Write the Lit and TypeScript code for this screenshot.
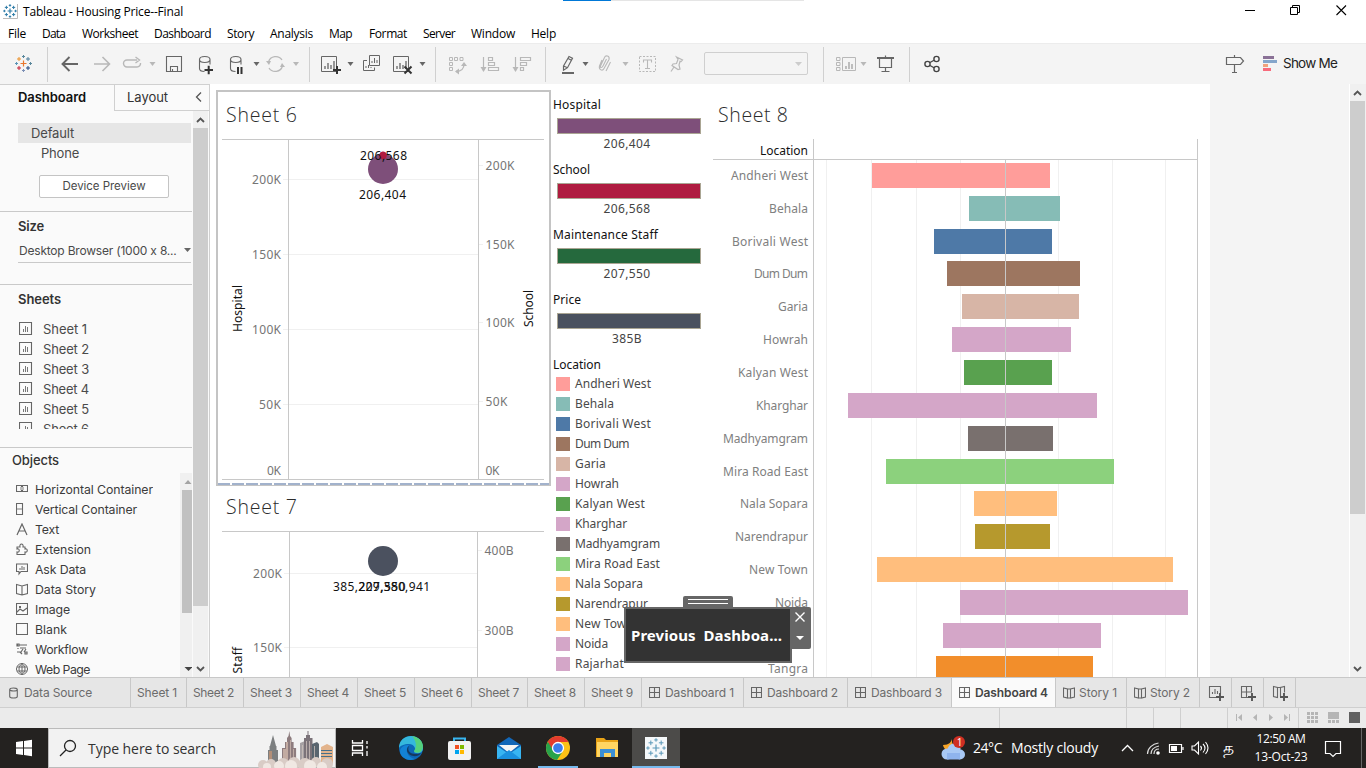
import { LitElement, html, svg, css } from "lit";
import { customElement, property } from "lit/decorators.js";

/** A single-line label whose tracking adapts so that it fills `w` pixels. */
@customElement("fit-text")
class FitText extends LitElement {
  @property() text = "";
  @property({ type: Number }) w = 0;
  static styles = css`
    :host { display: inline-block; white-space: pre; }
    .inner { display: inline-block; }
  `;
  firstUpdated() {
    const el = this.renderRoot.querySelector(".inner") as HTMLElement;
    const natural = el.getBoundingClientRect().width;
    if (this.w && natural) this.style.letterSpacing = (this.w - natural) / this.text.length + "px";
  }
  render() {
    return html`<span class="inner">${this.text}</span>`;
  }
}

const t = (text: string, w: number, cls = "") => html`<fit-text class=${cls} .text=${text} .w=${w}></fit-text>`;

/** A drawing that covers the window area x0..x1, y0..y1, in window coordinates. */
const area = (x0: number, x1: number, y0: number, y1: number, body: unknown) =>
  html`<svg class="area" width=${x1 - x0} height=${y1 - y0} viewBox="${x0} ${y0} ${x1 - x0} ${y1 - y0}">${body}</svg>`;

/** Chart text, vertically centred on cy. */
const label = (x: number, cy: number, text: string, w: number, cls = "axis", anchor = "start") =>
  svg`<text class=${cls} x=${x} y=${cy + (cls === "title" ? 7 : 4.5)} text-anchor=${anchor} textLength=${w} lengthAdjust="spacing">${text}</text>`;

const line = (x1: number, y1: number, x2: number, y2: number, c = "#c8c8c8", w = 1) =>
  svg`<line x1=${x1} y1=${y1} x2=${x2} y2=${y2} stroke=${c} stroke-width=${w} />`;
const path = (d: string, c = "#666", w = 1, fill = "none") =>
  svg`<path d=${d} stroke=${c} stroke-width=${w} fill=${fill} />`;
const fill = (d: string, c: string) => svg`<path d=${d} fill=${c} />`;
const rect = (x: number, y: number, w: number, h: number, c: string) =>
  svg`<rect x=${x} y=${y} width=${w} height=${h} fill=${c} />`;
const caret = (x: number, c = "#666") => fill(`M${x - 3} 62h6l-3 4z`, c);

const D = "#666";
const L = "#b8b8b8";
const plus = (x: number, y: number, r: number, c: string, w = 1) => path(`M${x - r} ${y}h${2 * r}M${x} ${y - r}v${2 * r}`, c, w);
const tableauMark = (x: number, y: number, k: number, cs: string[]) => [
  plus(x, y, 3 * k, cs[0], 1.2),
  plus(x - 4.5 * k, y - 4.5 * k, 2 * k, cs[1]), plus(x + 4.5 * k, y - 4.5 * k, 2 * k, cs[2]),
  plus(x - 4.5 * k, y + 4.5 * k, 2 * k, cs[3]), plus(x + 4.5 * k, y + 4.5 * k, 2 * k, cs[4]),
  plus(x, y - 7 * k, 1.5 * k, cs[5]), plus(x, y + 7 * k, 1.5 * k, cs[6]),
  plus(x - 7 * k, y, 1.5 * k, cs[7]), plus(x + 7 * k, y, 1.5 * k, cs[5]),
];
const blues = Array(8).fill("#2f7da8");
const sheetBox = (x: number, y: number, c = D) => [
  path(`M${x + 0.5} ${y + 0.5}h15v15h-15z`, c), path(`M${x + 4} ${y + 13}v-3M${x + 7} ${y + 13}v-6M${x + 10} ${y + 13}v-4M${x + 13} ${y + 13}v-8`, c, 1.3),
];
const sep = (x: number) => line(x + 0.5, 47, x + 0.5, 82, "#d0d0d0");
const db = (x: number) => path(`M${x} 59.5c0-4 10.500-4 10.500 0s-10.500 4-10.500 0v9c0 2 2 3 5 3M${x + 10.5} 59.500v5`, D, 1.1);

const toolbar: [number, number, unknown][] = [
  [0, 55, [tableauMark(23.5, 63.5, 1, ["#e8762d", "#eb912b", "#4f7f9c", "#c72037", "#1f457e", "#59879b", "#7b8fb5", "#5a93b5"]), sep(47)]],
  [55, 87, path("M78 64H63M69.5 57l-7 7l7 7", D, 1.9)],
  [87, 117, path("M94 64h15M102.500 57l7 7l-7 7", L, 1.6)],
  [117, 160, [path("M133 60h-6a3.500 3.500 0 0 0 0 7h10a3.500 3.500 0 0 0 3.500-4M130 60h7M135.500 57l4 3l-4 3", L, 1.4), caret(152.500, L)]],
  [160, 190, [path("M166.500 56.500h15v15h-15z", D, 1.1), path("M170.500 71v-4.500h7v4.500M172.500 71v-2", D, 1.1)]],
  [190, 220, [db(199.500), path("M204.500 70h8.500M208.700 65.800v8.500", "#333", 2)]],
  [220, 262, [db(230.500), path("M238 67v7M241.500 67v7", "#333", 2), caret(256.500)]],
  [262, 315, [path("M268.500 62a7.500 7.500 0 0 1 13.500-2M282.500 66a7.500 7.500 0 0 1-13.500 2", L, 1.3), fill("M266 61h5l-2 4zM280 67h5l-3-4z", L), caret(296, L), sep(309)]],
  [315, 357, [sheetBox(321, 56), path("M333 70h8M337 66v8", "#333", 2), caret(350.500)]],
  [357, 386, [path("M369.500 55.500h10v10h-10zM367 60.500h-3.500v10h11v-3", D), path("M372 63v-2M374.500 63v-5M377 63v-3M366 68v-2M368.500 68v-3M371 68v-1", D)]],
  [386, 442, [sheetBox(393, 56), path("M404.500 66.500l7 7M411.500 66.500l-7 7", "#333", 2), caret(422.500), sep(435)]],
  [442, 474, [path("M449.500 57.500h3v3h-3zM454.500 57.500h3v3h-3zM460 57.500h3v3h-3zM449.500 62.500h3v3h-3zM449.500 67.500h3v3h-3z", L), path("M464 64c0 5-2 7-8 7.500", L, 1.4), fill("M461 66l3-4 3 4zM459 68.500v6l-4-3z", L)]],
  [474, 506, [path("M483.500 57v14M488.500 57.500h4v3h-4zM488.500 62.500h6v3h-6zM488.500 67.500h10v3h-10z", L, 1.2), fill("M480.500 67h6l-3 5z", L)]],
  [506, 553, [path("M515.500 57v14M520.500 57.500h10v3h-10zM520.500 62.500h6v3h-6zM520.500 67.500h3v3h-3z", L, 1.2), fill("M512.500 67h6l-3 5z", L), sep(545)]],
  [553, 593, [path("M563.500 66l5.500-9.500l3.500 1.700l-5 9.500l-4 2.500zM563.500 66l4 1.700M568 58.500l3.500 1.700", D, 1.2), rect(562, 72, 12, 2, D), caret(585.500)]],
  [593, 633, [path("M602 60l-2.500 6c-1 4 3 5.500 4.500 2.500l5-9c1-4-3.500-4.500-4.500-2l-4 8.500c-.500 2 1.500 2 2.500 0l3.500-7M610.500 62l-4.500 9", L, 1.1), caret(625.500, L)]],
  [633, 663, [svg`<rect x="639.5" y="56.5" width="16" height="15" fill="none" stroke=${L} stroke-dasharray="2 1.5"/>`, path("M643.500 62.500v-2.500h8v2.500M647.500 60v8.500M645 68.500h5", L, 1.1)]],
  [663, 704, path("M676.500 57l6 3l-1.500 1.500l-1-.200l-1 3.700l1 4l-2 .500l-6-4l1-1.500l3.500-.500l1.500-4zM674 67l-3 4.500", L, 1.2)],
];
const toolbarRight: [number, number, unknown][] = [
  [808, 870, [sep(823), path("M836.500 57.500h3.500v3h-3.500zM836.500 62.500h3.500v3h-3.500zM836.500 67.500h3.500v3h-3.500zM842.500 57.500h13v13h-13z", L), path("M846 69v-3M849 69v-7M852 69v-5", L, 1.8), caret(863.500, L)]],
  [870, 917, [path("M879.500 58.500h12v9h-12zM885.500 55.500v3M885.500 67v5M881.500 71.500h8", D, 1.2), rect(877, 57, 17, 2, D), sep(909)]],
  [917, 950, [svg`<g fill="none" stroke="#444" stroke-width="1.4"><circle cx="927.5" cy="64" r="2.600"/><circle cx="936.500" cy="59" r="2.600"/><circle cx="936.500" cy="69" r="2.600"/></g>`, path("M930 62.500l4-2.300M930 65.500l4 2.300", "#444", 1.3)]],
];

const sheetIcon = area(0, 14, 0, 14, [path("M.5.500h12v12h-12z", D, 1.1), path("M4.500 10V7M6.500 10V4M8.500 10V5", D, .9)]);

const objectIcons = [
  [path("M.5 2.500h5v6h-5zM6.500 2.500h5v6h-5z", D, 1.1), rect(4, 4, 4, 3, "#bbb")],
  [path("M.5.500h6v5h-6zM.5 6.500h6v5h-6z", D, 1.1), rect(1, 5, 5, 2, "#bbb")],
  path("M1 12L6 1l5 11M3 8h6", D, 1.2),
  path("M1 4h3c-1-4 4-4 3 0h2v2c3-1 3 4 0 3v2.500H1V9c3 1 3-4 0-3z", D, 1.1),
  [path("M.5 1h11v7.500H5L3 11V8.500H.5z", D, 1.1), path("M4 7V5M6 7V3M8 7V4", D)],
  path("M.5 1.500L6 3l5.500-1.500v9L6 12L.5 10.500zM6 3v9", D, 1.1),
  [path("M.5.500h11v11H.5zM1 9l3-3l3 2l4-3", D, 1.1), rect(3, 3, 2, 2, D)],
  path("M.5.500h11v11H.5z", D, 1.1),
  path("M3 2h8M1 2h1M4 5h6M2 5v1M1 9h4l2-3M8 9l2-3M6 11l-2-2M1 1h2v2H1zM9 9h2v2H9z", D, 1.2),
  path("M6 .5a5.500 5.500 0 1 0 .01 0zM6 .5c-4 3-4 8 0 11c4-3 4-8 0-11M1 4h10M1 8h10M6 1v10", D, 1),
];
const objects: [string, number][] = [["Horizontal Container", 118], ["Vertical Container", 102], ["Text", 24], ["Extension", 56], ["Ask Data", 51], ["Data Story", 61], ["Image", 35], ["Blank", 32], ["Workflow", 53], ["Web Page", 55]];

const legendBars: [string, number, string, number, string][] = [
  ["Hospital", 48, "206,404", 47, "#7e4f7a"], ["School", 37, "206,568", 47, "#af1c40"],
  ["Maintenance Staff", 105, "207,550", 47, "#25693d"], ["Price", 28, "385B", 30, "#4a515f"],
];
/* name, colour, legend width, axis label width, bar start, bar end, bar top */
const places: [string, string, number, number, number, number, number][] = [
  ["Andheri West", "#ff9d9a", 76, 77, 872, 1050, 163],
  ["Behala", "#86bcb6", 39, 39, 969, 1060, 196],
  ["Borivali West", "#4e79a7", 76, 76, 934, 1052, 229],
  ["Dum Dum", "#9d7660", 54, 54, 947, 1080, 261],
  ["Garia", "#d7b5a6", 31, 30, 962, 1079, 294],
  ["Howrah", "#d4a6c8", 44, 45, 952, 1071, 327],
  ["Kalyan West", "#59a14f", 70, 70, 964, 1052, 360],
  ["Kharghar", "#d4a6c8", 52, 52, 848, 1097, 393],
  ["Madhyamgram", "#79706e", 85, 85, 968, 1053, 426],
  ["Mira Road East", "#8cd17d", 85, 85, 886, 1114, 459],
  ["Nala Sopara", "#ffbe7d", 68, 68, 974, 1057, 491],
  ["Narendrapur", "#b6992d", 73, 73, 975, 1050, 524],
  ["New Town", "#ffbe7d", 59, 59, 877, 1173, 557],
  ["Noida", "#d4a6c8", 33, 33, 960, 1188, 590],
  ["Rajarhat", "#d4a6c8", 49, 49, 943, 1101, 623],
  ["Tangra", "#f28e2b", 40, 40, 936, 1093, 656],
];

const rotated = (x: number, y: number, text: string, w: number, anchor: string) =>
  svg`<text class="head" transform="translate(${x} ${y}) rotate(-90)" text-anchor=${anchor} textLength=${w}>${text}</text>`;

const sheet6 = () => area(218, 549, 92, 482, [
  label(226, 115, "Sheet 6", 71, "title"),
  line(222, 139.5, 544, 139.5), line(222, 479.5, 544, 479.5),
  [["200K", 179.5], ["150K", 254.5], ["100K", 329.5], ["50K", 404.5]].map(([s, y]) => [
    line(283, y as number, 478, y as number, "#f0f0f0"), label(281, y as number, s as string, s === "50K" ? 22 : 29, "axis", "end")]),
  label(281, 470.5, "0K", 14, "axis", "end"),
  [["200K", 165.5], ["150K", 244.5], ["100K", 322.5], ["50K", 401.5]].map(([s, y]) => [
    line(479, y as number, 483, y as number, "#f0f0f0"), label(485.5, y as number, s as string, s === "50K" ? 22 : 29)]),
  label(485.5, 470.5, "0K", 14),
  line(288.5, 140, 288.5, 479), line(478.5, 140, 478.5, 479),
  svg`<circle cx="383" cy="169" r="15" fill="#7e4f7a"/>`,
  svg`<circle cx="383" cy="155.5" r="3.800" fill="#b11d42"/>`,
  label(360, 155.500, "206,568", 47, "mark"),
  svg`<circle cx="383" cy="154.5" r="3" fill="#b11d42" opacity=".75"/>`,
  label(359, 194.5, "206,404", 47, "mark"),
  rotated(241.5, 332, "Hospital", 47, "start"), rotated(532.500, 327, "School", 37, "start"),
]);

const sheet7 = () => area(216, 551, 486, 677, [
  label(226, 507, "Sheet 7", 71, "title"),
  line(222, 531.5, 544, 531.5),
  line(284, 573.5, 477, 573.5, "#f0f0f0"), line(284, 647.5, 477, 647.5, "#f0f0f0"),
  line(478, 550.5, 482, 550.5, "#f0f0f0"), line(478, 630.5, 482, 630.5, "#f0f0f0"),
  label(282, 573.5, "200K", 29, "axis", "end"), label(282, 647.5, "150K", 29, "axis", "end"),
  label(484.5, 550.5, "400B", 29), label(484.5, 630.5, "300B", 29),
  line(289.5, 532, 289.5, 677), line(477.5, 532, 477.5, 677),
  svg`<circle cx="383" cy="561" r="15" fill="#4b515f"/>`,
  label(333, 586.500, "385,229,380,941", 97, "mark"), label(358.500, 586.500, "207,550", 47, "mark"),
  rotated(241.5, 647, "Maintenance Staff", 105, "end"),
]);

const sheet8 = () => area(713, 1210, 84, 677, [
  label(718, 115, "Sheet 8", 70, "title"),
  label(808, 150.5, "Location", 48, "head", "end"),
  [826, 871, 916, 960, 1058, 1112, 1165].map((x) => line(x + 0.5, 160, x + 0.5, 677, "#f0f0f0")),
  places.map(([name, c, , w, a, b, y]) => [rect(a, y, b - a, 25, c), label(808, y + 12.3, name, w, "axis faint", "end")]),
  line(713, 159.5, 1198, 159.5), line(813.5, 139, 813.5, 677), line(1197.5, 139, 1197.5, 677), line(1005.5, 160, 1005.5, 677, "#c8c8c8"),
]);

const gridIcon = area(0, 11, 0, 11, path("M.5.500h10v10H.5zM5.500.500v10M.5 5.500h10", D, 1.1));
const bookIcon = area(0, 12, 0, 12, path("M.5 1l4 1v9l-4-1zM4.500 2h3M11.500 1l-4 1v9l4-1zM4.500 11h3", D, 1.1));
const dbIcon = area(0, 9, 0, 12, path("M.7 2.500c0-2 7.600-2 7.600 0s-7.600 2-7.600 0v7c0 2 7.600 2 7.600 0v-7", D, 1.1));

/* The taskbar's city illustration. */
const city = [
  fill("M267 764v-14h10v14zM268.500 750v-4h7v4zM269 746l3-11l3 11z", "#7c7f80"),
  fill("M268 764v-13h3v13z", "#b28f78"),
  fill("M281 764v-16h3v-6h2v-4l1.500-2l.800-5l.800 5l1.500 2v4h2v6h2.500v16z", "#8d7c7e"),
  fill("M282 764v-15h3v-7h2v22z", "#c2aba1"),
  path("M289.500 740v22M292.500 749v12", "#c9b6ac", 0.8),
  fill("M299 764v-21l5-2v23z", "#a5a0a3"),
  fill("M303 764v-26h2v-3h1.500v-4h1v4h1.500v3h2.500v26z", "#7b7379"),
  fill("M311 764v-20l5-2l2 2v20z", "#59656f"),
  path("M305.500 741v20M308.500 741v20M301.500 745v16M313.500 746v14", "#cabfba", 0.8),
  fill("M320 764v-17l6-3l6 3v17z", "#e3b48c"), path("M320 750.500h11M320 753.500h11M320 756.500h11", "#47708a", 1.2),
  svg`<g fill="#d9ccc6"><circle cx="262" cy="765" r="5"/><circle cx="270" cy="764" r="5"/><circle cx="282" cy="764" r="6"/><circle cx="293" cy="763" r="6"/><circle cx="304" cy="765" r="7"/><circle cx="315" cy="762" r="5"/><circle cx="326" cy="764" r="6"/></g>`,
  svg`<g fill="#f0e8e3"><circle cx="266" cy="767" r="4"/><circle cx="278" cy="766" r="5"/><circle cx="290" cy="766" r="6"/><circle cx="309" cy="766" r="6"/><circle cx="321" cy="767" r="5"/></g>`,
];

const apps: [number, number, unknown][] = [
  [336, 386, path("M352.500 740v3h10v-3M352.500 756v-3h10v3M352.500 745.500h10v5h-10zM367 741v3M367 746v2.500M367 751v5", "#fff", 1.3)],
  [386, 435, [svg`<circle cx="411" cy="748" r="12" fill="#0c68b8"/>`, fill("M399 748c0-16 24-16 24 0c0 6-7 6-9 4c3-3 0-8-5-8c-5 0-9 2-10 4z", "#35b8dc"), fill("M412 736c9 1 13 9 10 14c-2 4-8 3-8 1c4-5 1-12-2-15z", "#54d17c"), fill("M409 745c-5 5-1 13 6 14c-8 3-15-2-15-8c1-5 5-6 9-6z", "#1382d5"), fill("M409 746c-3 6 4 10 12 7c-3 5-12 4-14-2c0-2 0-4 2-5z", "#16395f")]],
  [435, 484, [path("M454 742v-3.500h11v3.500", "#38b6f0", 2), svg`<rect x="448" y="741" width="23" height="19" rx="2" fill="#f2f2f2"/>`, rect(455, 745, 4, 4, "#f25022"), rect(460, 745, 4, 4, "#7fba00"), rect(455, 750, 4, 4, "#00a4ef"), rect(460, 750, 4, 4, "#ffb900")]],
  [484, 533, [fill("M497 745l12-8 12 8v14h-24z", "#1267b8"), fill("M499 745h20l-10 8z", "#f5f5f5"), fill("M497 746l12 8 12-8v13h-24z", "#38b5f2"), fill("M497 759l12-9 12 9z", "#1b91df")]],
  [533, 582, [svg`<circle cx="558" cy="748" r="12" fill="#fbc116"/>`, fill("M547.600 742a12 12 0 0 1 20.800 0H558z", "#e33b2e"), fill("M547.600 742a12 12 0 0 0 9.400 18l6-9-5-3z", "#28a34b"), fill("M548 742l5 8 5-8z", "#e33b2e"), svg`<circle cx="558" cy="748" r="5.500" fill="#3b7ded" stroke="#fff" stroke-width="1.300"/>`, rect(538, 766, 40, 2, "#76b9ed")]],
  [582, 632, [fill("M596 738h8l2 2h12v17h-22z", "#e8a317"), fill("M597 742h21v15h-21z", "#ffd562"), fill("M600 749h15v8h-4v-4h-7v4h-4z", "#3b8fd5")]],
  [632, 680, [rect(632, 728, 48, 40, "#4c4b49"), rect(645, 737, 22, 22, "#f5f8fa"), tableauMark(656, 748, 1.15, Array(8).fill("#5b98b8")), rect(632, 766, 48, 2, "#76b9ed")]],
];
const tray: [number, number, unknown][] = [
  [1106, 1140, path("M1122 751l5.500-5.500l5.500 5.500", "#fff", 1.3)],
  [1140, 1164, [path("M1147.500 754c0-6 5-10 11-11M1151 754c0-4 3-7 8-8M1154 754c0-3 2-5 5-5", "#ddd", 1.2), svg`<circle cx="1158" cy="753" r="1.800" fill="#fff"/>`]],
  [1164, 1187, [path("M1169.500 744.500h12v8h-12zM1183 747v3", "#fff", 1.2), rect(1171, 746, 6, 5, "#fff")]],
  [1187, 1218, path("M1192 746h2.500l4-4v12l-4-4H1192zM1200.500 746q2 2 0 4.500M1203 744q4 4 0 8.500M1205.500 742q5 6 0 12", "#fff", 1.1)],
];

const sheetTabs: [string, number, number][] = [["Sheet 1", 56, 40], ["Sheet 2", 57, 41], ["Sheet 3", 57, 42], ["Sheet 4", 57, 42], ["Sheet 5", 57, 42], ["Sheet 6", 57, 42], ["Sheet 7", 56, 41], ["Sheet 8", 57, 42], ["Sheet 9", 57, 42]];

@customElement("app-root")
class AppRoot extends LitElement {
  static styles = css`
    :host { display: flex; flex-direction: column; width: 1366px; height: 768px; overflow: hidden; background: #fff; font: 12px "Open Sans", "Noto Sans", sans-serif; color: #000; }
    * { box-sizing: border-box; }
    .area { display: block; flex: none; overflow: hidden; }
    .titlebar { height: 24px; display: flex; align-items: stretch; flex: none; line-height: 23px; }
    .grow { flex: 1; }
    .progress { height: 1px; width: 241px; background: linear-gradient(90deg, #0078d7 48px, #e5e5e5 48px); margin-left: 380px; }
    .menu { height: 19px; flex: none; padding-left: 8px; display: grid; grid-template-columns: 34px 40px 72px 73px 43px 59px 40px 54px 48px 60px 40px; line-height: 19px; }
    .toolbar { height: 41px; flex: none; background: #f4f4f4; border-top: 1px solid #ececec; display: flex; }
    .toolbar .area { margin-top: -1px; }
    .picker { width: 104px; height: 23px; margin-top: 8px; border: 1px solid #cfcfcf; border-radius: 2px; display: flex; justify-content: flex-end; padding: 10px 4px; }
    .showme { font: 13.500px/39px "Inter", sans-serif; color: #222; padding-left: 4px; width: 87px; }
    .main { height: 593px; flex: none; display: flex; }

    .side { width: 210px; flex: none; background: #fafafa; border-right: 1px solid #d0d0d0; color: #4a4a4a; font-family: "Inter", sans-serif; font-size: 13px; }
    .side-tabs { height: 27px; display: flex; border-top: 1px solid #d0d0d0; line-height: 25px; }
    .side-tab { width: 114px; padding-left: 18px; color: #111; font-weight: 600; }
    .side-tab2 { flex: 1; display: flex; justify-content: space-between; border-left: 1px solid #d0d0d0; border-bottom: 1px solid #d0d0d0; padding-left: 12px; color: #333; }
    .side-body { display: flex; height: 566px; }
    .side-col { width: 192px; height: 566px; display: flex; flex-direction: column; overflow: hidden; }
    .sec { flex: none; border-bottom: 1px solid #c9c9c9; }
    .sec-device { height: 101px; padding-top: 12px; }
    .default { margin-left: 18px; width: 173px; height: 20px; line-height: 20px; background: #e6e6e6; padding-left: 13px; }
    .phone { padding-left: 41px; line-height: 21px; height: 32px; }
    .preview { margin-left: 39px; width: 130px; height: 23px; border: 1px solid #c4c4c4; border-radius: 2px; background: #fff; font-size: 11.500px; line-height: 20px; text-align: center; }
    .sec-size { height: 73px; padding: 5px 1px 0 18px; }
    .h { font-weight: 600; color: #333; line-height: 19px; height: 19px; }
    .size { margin-top: 3px; height: 24px; border-bottom: 1px solid #c9c9c9; display: flex; justify-content: space-between; align-items: center; padding-left: 1px; font-size: 12px; }
    .size .area { margin-bottom: 1px; }
    .sec-sheets { height: 163px; padding: 5px 0 0 18px; }
    .sheets { margin-top: 10px; height: 110px; overflow: hidden; }
    .sheet { height: 20px; display: flex; align-items: center; gap: 10px; padding-left: 1px; }
    .sec-objects { flex: 1; display: flex; flex-direction: column; min-height: 0; }
    .objects-h { padding: 3px 0 0 12px; height: 25px; font-weight: 500; color: #333; line-height: 19px; flex: none; }
    .objects { display: flex; flex: 1; justify-content: space-between; }
    .objlist { padding: 6px 0 0 16px; height: 204px; overflow: hidden; font-size: 12.300px; color: #3c3c3c; }
    .obj { height: 20px; display: flex; align-items: center; gap: 7px; }

    .canvas { width: 1139px; background: #f4f4f4; flex: none; display: flex; }
    .dash { width: 1000px; background: #fff; display: flex; font-family: "Noto Sans", sans-serif; }
    .colA { width: 335px; margin-left: 6px; padding-top: 6px; height: 593px; overflow: hidden; flex: none; }
    .selected { width: 335px; height: 396px; border: 2px solid #c4c4c4; border-bottom: 0; }
    .dashes { height: 3px; margin-top: 1px; background: repeating-linear-gradient(90deg, #a2b2cc 0 12px, #fff 12px 14px); border-bottom: 1px solid #c4c4c4; }
    .colB { width: 162px; flex: none; padding: 11px 0 0 2px; overflow: hidden; height: 593px; color: #333; }
    .param { height: 65px; }
    .param-name { height: 20px; line-height: 20px; color: #111; }
    .param-bar { margin: 3px 0 0 4px; width: 144px; height: 16px; border: 1px solid #aaa593; }
    .param-val { text-align: center; width: 148px; line-height: 19px; color: #444; }
    .places-h { height: 20px; line-height: 20px; color: #111; }
    .place { height: 20px; display: flex; align-items: center; gap: 5px; padding-left: 3px; color: #4a4a4a; line-height: 16px; }
    .place fit-text { margin-top: -2px; }
    .swatch { width: 14px; height: 14px; margin-top: -2px; }
    text { font: 12px "Noto Sans", sans-serif; fill: #757575; }
    text.title { font: 300 19.500px "Open Sans", sans-serif; fill: #2c2c2c; }
    text.faint { fill: #808080; }
    text.mark { fill: #111; }
    text.head { fill: #111; }

    .floating { position: absolute; left: 624px; top: 596px; width: 187px; height: 67px; display: grid; grid-template: 11px 56px / 167px 20px; }
    .grip { width: 50px; height: 11px; margin-left: 59px; background: #666; border-radius: 2px 2px 0 0; padding: 3px 5px; grid-column: 1 / 3; }
    .grip-lines { height: 5px; border-top: 1px solid #fff; border-bottom: 1px solid #fff; }
    .prev { width: 168px; height: 56px; background: #333; border: 2px solid #666; color: #fff; font: 700 15px/52px "Noto Sans", sans-serif; padding-left: 5px; white-space: nowrap; }
    .prev-side { background: #666; height: 42px; border-radius: 0 2px 2px 0; }

    .tabs { height: 31px; flex: none; display: flex; background: #e6e6e6; border-top: 1px solid #c8c8c8; border-bottom: 1px solid #cfcfcf; color: #6c6c6c; font: 12px/28px "Inter", sans-serif; }
    .tab { border-right: 1px solid #c8c8c8; display: flex; align-items: center; padding-left: 6px; gap: 5px; flex: none; }
    .tab.src { width: 131px; padding-left: 9px; gap: 6px; }
    .tab.sh .area { margin-right: 0; }
    .w56 { width: 56px; } .w57 { width: 57px; }
    .w102 { width: 102px; } .w104 { width: 104px; } .w71 { width: 71px; } .w73 { width: 73px; }
    .w102, .w104 { padding-left: 7px; }
    .w71, .w73 { padding-left: 7px; gap: 4px; }
    .tab.on { background: #fafafa; color: #444; font-weight: 600; }
    .status { height: 20px; flex: none; background: #ebebeb; display: flex; }
    .taskbar { height: 40px; flex: none; background: #242220; display: flex; color: #fff; font-size: 14px; line-height: 40px; }
    .search { width: 288px; background: #f2f2f2; border: 1px solid #bbb; display: flex; color: #333; line-height: 39px; }
    .search .area { margin-top: -1px; }
    .temp { width: 38px; } .cloudy { width: 95px; }
    .lang { width: 35px; padding-left: 5px; font-size: 17px; }
    .clock { width: 60px; font-size: 12px; line-height: 18px; padding-top: 2px; text-align: center; margin-left: -2px; }
    .clock-end { width: 1px; }
  `;

  render() {
    return html`
      <div class="titlebar">
        ${area(0, 23, 0, 24, [rect(3, 4, 15, 15, "#fff"), path("M3 18.500h14.500V4", "#bbb"), tableauMark(10, 11, 0.8, blues)])}
        ${t("Tableau - Housing Price--Final", 160)}
        <div class="progress"></div><div class="grow"></div>
        ${area(1236, 1366, 0, 24, [path("M1245 10.500h10M1290.500 7.500h7v7h-7zM1292.500 7V5.500h7v7h-2", "#000"), path("M1336.500 5.500l9.500 9.500M1346 5.500l-9.500 9.500", "#000", 1.1)])}
      </div>
      <div class="menu">
        ${([["File", 18], ["Data", 23], ["Worksheet", 56], ["Dashboard", 57], ["Story", 27], ["Analysis", 43], ["Map", 23], ["Format", 38], ["Server", 32], ["Window", 44], ["Help", 25]] as [string, number][]).map(([m, w]) => t(m, w))}
      </div>
      <div class="toolbar">
        ${toolbar.map(([a, b, c]) => area(a, b, 43, 84, c))}
        <div class="picker">${area(0, 8, 0, 5, fill("M0 0h7L3.500 4z", "#ccc"))}</div>
        ${toolbarRight.map(([a, b, c]) => area(a, b, 43, 84, c))}
        <div class="grow"></div>
        ${area(1218, 1279, 43, 84, [path("M1226.500 57.500h14l3 3.500l-3 3.500h-14zM1234.500 55v2.500M1234.500 64.500v7.500M1232 72.500h5", D, 1.2), rect(1263, 56, 11, 3, "#8a7196"), rect(1263, 60, 14, 3, "#85a6cb"), rect(1263, 64, 5, 3, "#f0a27c"), rect(1263, 68, 8, 3, "#f86b7c")])}
        <div class="showme">${t("Show Me", 54)}</div>
      </div>
      <div class="main">
        ${this.sidebar()}
        <div class="canvas">
          <div class="dash">
            <div class="colA">
              <div class="selected">${sheet6()}<div class="dashes"></div></div>
              ${sheet7()}
            </div>
            <div class="colB">
              ${legendBars.map(([n, w, v, vw, c]) => html`<div class="param">
                <div class="param-name">${t(n, w)}</div>
                <div class="param-bar" style="background:${c}"></div>
                <div class="param-val">${t(v, vw)}</div></div>`)}
              <div class="places-h">${t("Location", 48)}</div>
              ${places.slice(0, 15).map(([n, c, w]) => html`<div class="place"><div class="swatch" style="background:${c}"></div>${t(n, w)}</div>`)}
            </div>
            ${sheet8()}
          </div>
        </div>
        ${area(1349, 1366, 84, 677, [rect(1349, 84, 17, 593, "#f0f0f0"), rect(1349, 84, 1, 593, "#fff"), rect(1350, 101, 15, 413, "#cdcdcd"), path("M1354 95l3.500-3.500l3.500 3.500M1354 667l3.500 3.500l3.500-3.500", "#555", 1.8)])}
      </div>
      <div class="floating">
        <div class="grip"><div class="grip-lines"></div></div>
        <div class="prev">${t("Previous  Dashboa...", 151)}</div>
        <div class="prev-side">${area(791, 811, 607, 649, [path("M795.500 612.500l9 9M804.500 612.500l-9 9", "#fff", 1.400), fill("M796 636h8l-4 4z", "#fff")])}</div>
      </div>
      <div class="tabs">
        <div class="tab src">${dbIcon}${t("Data Source", 68)}</div>
        ${sheetTabs.map(([n, w, tw]) => html`<div class="tab w${w}">${t(n, tw)}</div>`)}
        <div class="tab w102">${gridIcon}${t("Dashboard 1", 69)}</div>
        <div class="tab w104">${gridIcon}${t("Dashboard 2", 71)}</div>
        <div class="tab w104">${gridIcon}${t("Dashboard 3", 71)}</div>
        <div class="tab w104 on">${gridIcon}${t("Dashboard 4", 73)}</div>
        <div class="tab w71">${bookIcon}${t("Story 1", 38)}</div>
        <div class="tab w73">${bookIcon}${t("Story 2", 40)}</div>
        ${area(1200, 1366, 678, 707, [
          path("M1216 697.500h-6.500v-11h11v7M1212.500 694v-2M1215 694v-5M1217.500 694v-3", D, 1.100), path("M1216 697h8M1220 693v8", "#555", 1.900),
          path("M1248 697.500h-6.500v-11h10v6M1246.500 687v10M1241.500 692h10", D, 1.1), path("M1248 697h8M1252 693v8", "#555", 1.900),
          path("M1273.500 686.500l4 1v10l-4-1zM1277.500 687.500h3M1280.500 697v-9.500l4-1v6", D, 1.1), path("M1280 697h8M1284 693v8", "#555", 1.900),
          line(1231.5, 678, 1231.5, 707), line(1263.5, 678, 1263.5, 707), line(1295.5, 678, 1295.5, 707),
        ])}
      </div>
      <div class="status"><div class="grow"></div>
        ${area(990, 1366, 708, 728, [
          [999, 1126, 1153, 1180, 1227, 1298].map((x) => line(x + 0.5, 708, x + 0.5, 728, "#cfcfcf")),
          path("M1236.500 714v7", "#b5b5b5"), fill("M1242 714v7l-4-3.500zM1257 714v7l-4-3.500zM1269 714v7l4-3.500zM1284 714v7l4-3.500z", "#b5b5b5"), path("M1289.500 714v7", "#b5b5b5"),
          [0, 4, 8].map((x) => [0, 4, 8].map((y) => rect(1307 + x, 712 + y, 3, 3, "#b5b5b5"))),
          rect(1328, 712, 11, 7, "#b5b5b5"), [0, 4, 8].map((x) => rect(1328 + x, 720, 3, 3, "#b5b5b5")), rect(1349, 712, 11, 11, "#606060"),
        ])}
      </div>
      <div class="taskbar">
        ${area(0, 48, 728, 768, [fill("M16 742l7-1v6.500h-7zM24 740.900l8-1.100v7.700h-8zM16 748.500h7v6.600l-7-1zM24 748.500h8v7.700l-8-1.100z", "#fff")])}
        <div class="search">
          ${area(49, 88, 728, 768, [svg`<circle cx="70" cy="746" r="5.500" fill="none" stroke="#222" stroke-width="1.300"/>`, path("M66 750l-6 6", "#222", 1.3)])}
          ${t("Type here to search", 128)}<div class="grow"></div>${area(256, 334, 728, 768, city)}
        </div>
        ${apps.map(([a, b, c]) => area(a, b, 728, 768, c))}
        <div class="grow"></div>
        ${area(936, 973, 728, 768, [fill("M952 737c-1 8 2 10 9 11c-6 6-17 4-18-3c6 0 9-3 9-8z", "#f6a427"), svg`<g fill="#a9c9f5"><circle cx="947" cy="754" r="5.500"/><circle cx="954" cy="750" r="6.500"/><circle cx="960" cy="754.500" r="5"/></g>`, rect(947, 753, 13, 6.500, "#8fb4ee"), svg`<circle cx="959" cy="742" r="6" fill="#cf2f22"/><text x="956.8" y="745.500" style="fill:#fff;font-size:10px">1</text>`])}
        <div class="temp">${t("24°C", 29)}</div><div class="cloudy">${t("Mostly cloudy", 87)}</div>
        ${tray.map(([a, b, c]) => area(a, b, 728, 768, c))}
        <div class="lang">த</div>
        <div class="clock">${t("12:50 AM", 49)}<br />${t("13-Oct-23", 53)}</div>
        <div class="clock-end"></div>
        ${area(1312, 1366, 728, 768, [path("M1325.500 741.500h15v12h-4.500l-3 3l-3-3h-4.500z", "#fff", 1.2), line(1361.5, 728, 1361.5, 768, "#666")])}
      </div>
    `;
  }

  sidebar() {
    return html`<div class="side">
      <div class="side-tabs">
        <div class="side-tab">${t("Dashboard", 68)}</div>
        <div class="side-tab2">${t("Layout", 41)}${area(190, 209, 85, 110, path("M201 92.500l-4.500 4.500l4.500 4.500", "#555", 1.3))}</div>
      </div>
      <div class="side-body">
        <div class="side-col">
          <div class="sec sec-device">
            <div class="default">${t("Default", 43)}</div>
            <div class="phone">${t("Phone", 38)}</div>
            <div class="preview">${t("Device Preview", 83)}</div>
          </div>
          <div class="sec sec-size">
            <div class="h">${t("Size", 26)}</div>
            <div class="size">${t("Desktop Browser (1000 x 8...", 159)}${area(0, 7, 0, 5, fill("M0 0h7L3.500 4z", D))}</div>
          </div>
          <div class="sec sec-sheets">
            <div class="h">${t("Sheets", 43)}</div>
            <div class="sheets">${[1, 2, 3, 4, 5, 6].map((n) => html`<div class="sheet">${sheetIcon}${t("Sheet " + n, n === 1 ? 44 : 46)}</div>`)}</div>
          </div>
          <div class="sec-objects">
            <div class="objects-h">${t("Objects", 47)}</div>
            <div class="objects">
              <div class="objlist">${objects.map(([n, w], i) => html`<div class="obj">${area(0, 12, 0, 13, objectIcons[i])}${t(n, w)}</div>`)}</div>
              ${area(180, 192, 473, 677, [rect(180, 473, 12, 204, "#f0f0f0"), rect(182, 490, 10, 123, "#c1c1c1"), fill("M184.500 484h7l-3.500-4z", "#a3a3a3"), fill("M184.500 667h8l-4 4z", "#444")])}
            </div>
          </div>
        </div>
        ${area(192, 209, 111, 677, [rect(193, 111, 15, 566, "#f0f0f0"), rect(193, 128, 15, 478, "#cdcdcd"), path("M197 122l3.500-3.500l3.500 3.500M197 667l3.500 3.500l3.500-3.500", "#555", 1.8)])}
      </div>
    </div>`;
  }
}
